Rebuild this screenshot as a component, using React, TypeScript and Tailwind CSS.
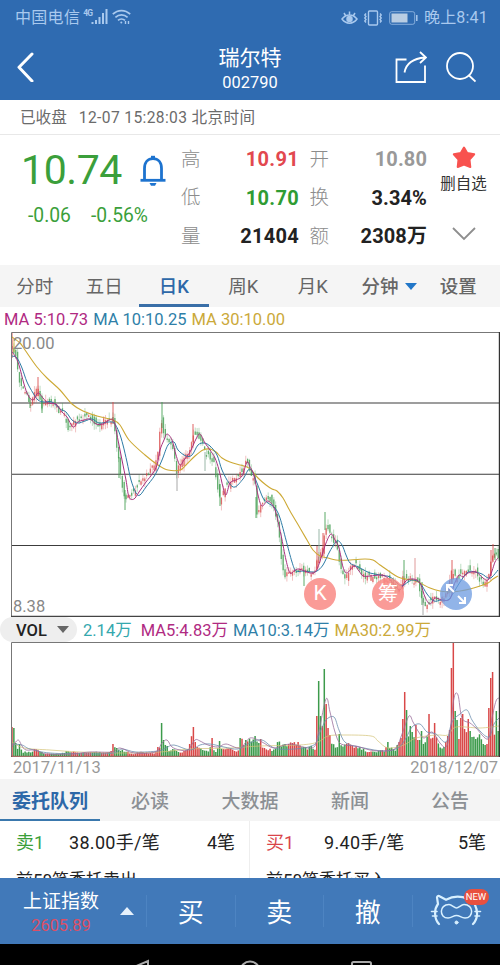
import React from 'react';
import { clsx } from 'clsx';

type Point = [number, number];

const GREEN = '#3d9b4c';
const RED = '#d94848';
const STEP = 1.87;
const COUNT = 261;

// Rough closing path of the year, in chart coordinates
const closes: Point[] = [
  [12, 345], [16, 358], [20, 387], [24, 388], [28, 398], [31, 403], [35, 392], [38, 387], [42, 408], [46, 402],
  [50, 400], [55, 405], [60, 412], [64, 412], [68, 427], [72, 424], [76, 420], [80, 418], [84, 418], [88, 416],
  [92, 418], [95, 426], [100, 424], [104, 421], [108, 420], [113, 420], [116, 440], [119, 463], [122, 484], [124, 498],
  [130, 496], [135, 491], [140, 482], [144, 478], [150, 472], [155, 464], [158, 450], [161, 418], [163, 432], [166, 438],
  [170, 444], [174, 450], [176, 473], [180, 465], [185, 454], [190, 452], [193, 436], [198, 434], [202, 443], [206, 454],
  [210, 457], [214, 462], [217, 482], [220, 500], [224, 490], [230, 480], [236, 478], [242, 471], [247, 460], [250, 472],
  [255, 482], [257, 512], [262, 505], [266, 500], [270, 500], [275, 512], [278, 525], [281, 555], [284, 572], [286, 576],
  [290, 572], [295, 572], [300, 568], [304, 572], [310, 573], [315, 570], [318, 556], [322, 550], [325, 529], [328, 530],
  [332, 537], [337, 545], [340, 565], [344, 578], [348, 572], [352, 567], [355, 562], [360, 572], [365, 576], [370, 575],
  [375, 576], [380, 577], [385, 577], [390, 582], [395, 588], [400, 590], [403, 576], [407, 580], [410, 577], [414, 582],
  [418, 580], [421, 595], [424, 605], [428, 605], [432, 600], [436, 597], [440, 600], [445, 599], [449, 585], [452, 570],
  [456, 577], [460, 575], [465, 572], [470, 570], [475, 572], [480, 580], [485, 583], [488, 578], [490, 567], [492, 556],
  [495, 552], [499, 560],
];

const ma5: Point[] = [
  [12, 352], [15, 356], [19, 365], [24, 384], [28, 395], [33, 400], [38, 393], [43, 398], [48, 403], [56, 404],
  [62, 412], [67, 417], [73, 427], [78, 422], [84, 420], [90, 419], [96, 424], [103, 424], [109, 420], [114, 421],
  [118, 440], [122, 460], [126, 480], [129, 497], [134, 499], [139, 492], [146, 482], [153, 473], [157, 465], [160, 450],
  [164, 440], [167, 434], [172, 440], [176, 455], [180, 465], [184, 460], [190, 452], [196, 439], [200, 434], [205, 443],
  [210, 450], [215, 458], [219, 470], [223, 487], [226, 495], [230, 483], [236, 480], [242, 476], [247, 462], [250, 467],
  [254, 475], [258, 495], [262, 506], [268, 501], [275, 510], [281, 535], [286, 560], [290, 573], [294, 571], [299, 569],
  [310, 573], [316, 571], [321, 558], [326, 543], [331, 534], [335, 540], [339, 548], [343, 567], [347, 573], [354, 566],
  [359, 571], [363, 576], [370, 576], [380, 575], [385, 576], [390, 580], [396, 587], [400, 590], [405, 582], [410, 579],
  [417, 580], [421, 585], [425, 597], [430, 604], [435, 598], [442, 600], [450, 599], [454, 585], [459, 575], [463, 577],
  [468, 573], [476, 572], [483, 578], [488, 580], [492, 571], [495, 562], [498, 558],
];

const ma10: Point[] = [
  [12, 356], [17, 358], [22, 368], [27, 382], [33, 393], [38, 400], [44, 402], [52, 402], [60, 409], [66, 412],
  [72, 420], [78, 423], [85, 421], [92, 419], [99, 423], [108, 422], [114, 423], [119, 432], [123, 445], [127, 462],
  [131, 480], [136, 493], [140, 495], [146, 487], [155, 475], [162, 460], [168, 445], [174, 442], [178, 450], [186, 456],
  [192, 455], [198, 445], [204, 443], [210, 446], [217, 455], [222, 470], [229, 483], [235, 487], [243, 479], [250, 469],
  [257, 483], [263, 498], [268, 503], [275, 508], [280, 518], [286, 540], [292, 562], [296, 571], [303, 571], [312, 572],
  [317, 571], [323, 565], [330, 551], [337, 541], [342, 545], [346, 555], [350, 563], [356, 566], [362, 569], [370, 573],
  [380, 575], [390, 577], [397, 583], [402, 586], [408, 582], [413, 580], [420, 583], [427, 594], [434, 601], [441, 600],
  [448, 600], [454, 592], [460, 582], [468, 572], [475, 572], [482, 574], [488, 578], [492, 577], [498, 570],
];

const ma30: Point[] = [
  [12, 337], [20, 343], [25, 350], [37, 367], [47, 378], [60, 390], [72, 404], [83, 411], [97, 416], [113, 420],
  [120, 425], [129, 440], [145, 455], [158, 465], [168, 470], [180, 470], [186, 465], [195, 456], [203, 450], [210, 449],
  [216, 452], [222, 458], [230, 462], [240, 465], [247, 467], [251, 470], [258, 478], [266, 485], [272, 489], [277, 491],
  [283, 498], [290, 511], [300, 528], [307, 540], [313, 550], [320, 556], [328, 558], [336, 560], [350, 560], [365, 559],
  [373, 560], [380, 565], [390, 572], [398, 577], [405, 579], [413, 580], [420, 583], [430, 588], [440, 591], [450, 592],
  [460, 591], [470, 589], [480, 586], [488, 583], [493, 579], [498, 576],
];

// Days whose range stands out: x, high, low, colour
const spikes: [number, number, number, string][] = [
  [12, 333, 358, RED], [14, 338, 352, '#d9b23c'], [38, 377, 396, RED], [30, 398, 408, GREEN], [42, 400, 413, GREEN],
  [113, 402, 424, RED], [162, 402, 428, GREEN], [119, 457, 478, GREEN], [125, 490, 510, GREEN], [177, 470, 491, '#999'],
  [193, 424, 442, RED], [205, 452, 471, '#88aa99'], [220, 484, 506, GREEN], [256, 497, 518, GREEN], [304, 572, 586, GREEN],
  [317, 546, 570, RED], [319, 529, 560, '#88aa99'], [323, 533, 556, RED], [325, 512, 530, GREEN], [404, 560, 580, GREEN],
  [415, 558, 584, '#d98a8a'], [422, 582, 605, GREEN], [423, 600, 615, '#999'], [452, 560, 585, RED], [491, 550, 576, RED],
  [493, 544, 562, RED], [495, 548, 560, GREEN],
];

// Volume profile: x, height, optional fixed colour
const volumes: [number, number, string?][] = [
  [12, 29, RED], [13.9, 28, GREEN], [15.7, 13, GREEN], [18, 6], [20, 12, GREEN], [22, 4], [31, 4], [34, 7, RED],
  [38, 7], [43, 3], [60, 2], [68, 5], [80, 3], [100, 4], [111, 4], [113, 12, RED], [116, 8, GREEN], [120, 6],
  [125, 5], [132, 2], [140, 4], [155, 3], [158, 9, RED], [160, 7], [162, 33, GREEN], [163.6, 16, GREEN], [165, 13],
  [169, 6], [174, 8], [180, 4], [187, 6], [190, 12, RED], [193, 29, RED], [195, 14, RED], [198, 8], [203, 7],
  [209, 4], [211.5, 18, RED], [214, 6], [217, 4], [219, 15, GREEN], [221, 8], [230, 7], [239, 5], [241, 18, GREEN],
  [243, 13], [246, 16, GREEN], [250, 15], [256, 20, GREEN], [258, 10], [260, 17, RED], [263, 8], [274, 6], [278, 13],
  [285, 12], [292, 12], [298, 14, RED], [306, 8], [312, 9], [315, 7], [317, 40, RED], [319, 75, GREEN], [321, 40, GREEN],
  [323, 30, RED], [324.8, 87, GREEN], [326.7, 52, RED], [328.6, 28, RED], [330.5, 21, RED], [332, 12], [337, 9],
  [339, 22, GREEN], [341, 12], [352, 11], [362, 7], [370, 4], [385, 6], [387.5, 14, GREEN], [390, 8], [395, 6],
  [399, 14, RED], [400.6, 18, RED], [402.5, 37, RED], [404.4, 64, RED], [406.2, 46, GREEN], [408, 20], [410, 30, GREEN],
  [413, 24], [415.5, 31, RED], [418, 16], [421, 25, GREEN], [424, 10], [426, 14], [428.5, 42, RED], [430, 20],
  [434.3, 33, RED], [437, 14], [441, 7], [443, 7], [445.4, 14, RED], [448.8, 26, RED], [450.7, 88, RED], [452.6, 114, RED],
  [454.5, 45, GREEN], [456.4, 36, GREEN], [458.5, 17, RED], [461, 38, RED], [463.5, 42, RED], [466, 26], [468, 37, RED],
  [470, 25, GREEN], [474, 20], [480, 20], [487, 11], [489.6, 48, RED], [491.5, 78, RED], [493.5, 84, RED],
  [495.4, 45, GREEN], [497.4, 25, GREEN],
];

const volMa5: Point[] = [
  [12, 747], [18, 740], [22, 746], [26, 750], [36, 750], [46, 754], [70, 754], [90, 752], [112, 752], [120, 748],
  [134, 753], [155, 752], [162, 743], [167, 740], [172, 747], [180, 750], [188, 750], [195, 740], [200, 741], [208, 745],
  [218, 747], [226, 744], [240, 748], [250, 738], [262, 742], [274, 748], [290, 744], [312, 748], [318, 735], [326, 699],
  [330, 712], [335, 732], [341, 744], [356, 746], [370, 750], [384, 751], [396, 748], [402, 734], [409, 716], [413, 722],
  [418, 731], [424, 738], [432, 732], [440, 743], [446, 747], [450, 732], [454, 698], [458, 695], [462, 718], [470, 723],
  [476, 728], [488, 739], [492, 718], [496, 701], [499, 698],
];
const volMa10: Point[] = [
  [12, 744], [22, 745], [30, 749], [50, 753], [90, 754], [114, 753], [122, 749], [136, 752], [158, 751], [166, 748],
  [174, 745], [190, 750], [200, 745], [210, 744], [224, 747], [238, 749], [250, 743], [262, 740], [278, 749], [312, 746],
  [320, 732], [326, 720], [334, 717], [339, 730], [346, 743], [364, 748], [384, 751], [398, 748], [406, 738], [412, 727],
  [420, 724], [427, 732], [436, 734], [446, 742], [452, 722], [460, 714], [467, 710], [472, 720], [480, 731], [489, 737],
  [494, 724], [499, 718],
];
const volMa30: Point[] = [
  [12, 742], [24, 748], [50, 750], [80, 752], [120, 753], [160, 752], [190, 749], [230, 748], [260, 746], [300, 745],
  [318, 742], [328, 736], [345, 735], [371, 736], [378, 741], [388, 748], [404, 745], [416, 738], [436, 735], [448, 735],
  [456, 727], [480, 728], [499, 726],
];

const noise = (n: number) => {
  const v = Math.sin(n * 127.1 + 11.7) * 43758.5453;
  return v - Math.floor(v);
};

const valueAt = (points: readonly (readonly [number, number, ...unknown[]])[], x: number) => {
  const next = points.findIndex((p) => p[0] >= x);
  if (next === -1) return points[points.length - 1][1];
  if (next === 0) return points[0][1];
  const [x0, y0] = points[next - 1];
  const [x1, y1] = points[next];
  return y0 + ((y1 - y0) * (x - x0)) / (x1 - x0);
};

// Catmull-Rom through all points
const smooth = (p: Point[]) => {
  let d = `M${p[0][0]} ${p[0][1]}`;
  for (let i = 0; i < p.length - 1; i++) {
    const a = p[Math.max(0, i - 1)];
    const b = p[i];
    const c = p[i + 1];
    const e = p[Math.min(p.length - 1, i + 2)];
    d += `C${b[0] + (c[0] - a[0]) / 6} ${b[1] + (c[1] - a[1]) / 6} ${c[0] - (e[0] - b[0]) / 6} ${c[1] - (e[1] - b[1]) / 6} ${c[0]} ${c[1]}`;
  }
  return d;
};

const PriceChart: React.FC = () => (
  <svg className="block w-[489px] h-[285px]" viewBox="11 332 489 285" fill="none">
    {[403, 474.3, 545.5].map((y) => (
      <path key={y} d={`M11 ${y}H499`} stroke="#3c3c3c" strokeWidth="1.1" />
    ))}
    {Array.from({ length: COUNT }, (_, i) => {
      const x = 12 + i * STEP;
      const shift = (noise(i + 200) - 0.5) * 5;
      const close = valueAt(closes, x) + shift;
      const open = valueAt(closes, x - STEP) + shift + (noise(i) - 0.5) * 9;
      const color = close > open ? GREEN : RED;
      const top = Math.max(335, Math.min(open, close) - 0.5);
      const bottom = Math.min(612, Math.max(open, close) + 0.8);
      return (
        <g key={i} opacity="0.8">
          <path
            d={`M${x} ${Math.max(334, top - noise(i + 400) * 6)}V${Math.min(614, bottom + noise(i + 800) * 6)}`}
            stroke={color}
            strokeWidth="0.6"
            opacity="0.7"
          />
          <path d={`M${x} ${top}V${bottom}`} stroke={color} strokeWidth="1.3" />
        </g>
      );
    })}
    {spikes.map(([x, high, low, color]) => (
      <path key={x} d={`M${x} ${high}V${low}`} stroke={color} strokeWidth="1" opacity="0.85" />
    ))}
    <path d={smooth(ma30)} stroke="#cda935" strokeWidth="1.1" />
    <path d={smooth(ma10)} stroke="#2c7aa5" />
    <path d={smooth(ma5)} stroke="#a9307f" />
    <path d="M11.5 617V332.5H499" stroke="#777" />
    <path d="M11 616.3H500" stroke="#444" strokeWidth="1.2" />
    <path d="M499.4 332V617" stroke="#333" strokeWidth="1.2" />
  </svg>
);

const VolumeChart: React.FC = () => (
  <svg className="block w-[489px] h-[115px]" viewBox="11 642 489 115" fill="none">
    {Array.from({ length: COUNT }, (_, i) => {
      const x = 12 + i * STEP;
      const fixed = volumes.find((v) => v[2] && Math.abs(v[0] - x) <= STEP / 2);
      const h = fixed ? fixed[1] : Math.min(24, valueAt(volumes, x)) * (0.75 + noise(i + 50) * 0.4);
      const rising = valueAt(closes, x) < valueAt(closes, x - STEP * 2) + (noise(i + 9) - 0.5) * 5;
      const color = fixed?.[2] ?? (rising ? RED : GREEN);
      return <path key={i} d={`M${x} 756V${756 - h}`} stroke={color} strokeWidth="1.5" />;
    })}
    <path d={smooth(volMa30)} stroke="#d3c274" strokeWidth="0.7" />
    <path d={smooth(volMa10)} stroke="#6d8fae" strokeWidth="0.8" />
    <path d={smooth(volMa5)} stroke="#9a6f9c" strokeWidth="0.8" />
    <path d="M11.5 757V642.5H499" stroke="#777" />
    <path d="M11 756.3H500" stroke="#8a4a40" />
    <path d="M499.4 642V757" stroke="#333" strokeWidth="1.2" />
  </svg>
);

const StatusBar: React.FC = () => (
  <div className="h-[34px] flex items-center justify-between pl-[15px] pr-3 pt-0.5 text-[#a9c9ee] text-base leading-none">
    <div className="flex items-center">
      <span className="tracking-[0.3px]">中国电信</span>
      <span className="w-[9px] text-[8.5px] font-bold ml-[3px] -mt-2.5 tracking-[-0.8px]">4G</span>
      <svg className="w-[17px] h-4 -ml-px -mt-0.5" viewBox="0 0 17 16" fill="currentColor">
        <path d="M.5 13h2v2h-2zM4 11h2v4H4zM7.5 8h2v7h-2zM11 4h2v11h-2zM14.500 0h2v15h-2z" />
      </svg>
      <svg className="w-[19px] h-4 ml-1 -mt-0.5" viewBox="0 0 19 16" fill="none" stroke="currentColor" strokeWidth="1.7">
        <path d="M.8 5.200c5-4.900 12.400-4.900 17.400 0M3.400 8.400c3.600-3.300 8.600-3.300 12.200 0M6 11.400c2-1.900 5-1.900 7 0" />
        <circle cx="9.300" cy="13.600" r="1" fill="currentColor" stroke="none" />
        <path d="M13.500 12v3M16.500 12v3" strokeWidth="1.400" />
      </svg>
    </div>
    <div className="flex items-center">
      <svg className="w-[17px] h-4" viewBox="0 0 17 16" fill="none" stroke="currentColor" strokeWidth="1.5">
        <path d="M1 9c4-5.500 11-5.500 15 0-4 5.500-11 5.500-15 0zM8.500 4.500V1.500M4.500 5.500 3 3M12.500 5.500 14 3" />
        <circle cx="8.500" cy="9" r="2.500" fill="currentColor" />
      </svg>
      <svg className="w-5 h-4 ml-[5px]" viewBox="0 0 20 16" fill="none" stroke="currentColor" strokeWidth="1.400">
        <rect x="5.500" y="1" width="9" height="14" rx="1" />
        <path d="M3 3.500 1.800 5 3 6.500 1.800 8 3 9.500 1.800 11 3 12.500M17 3.500 18.200 5 17 6.500 18.200 8 17 9.500 18.200 11 17 12.500" />
      </svg>
      <svg className="w-[29px] h-[14px] ml-1.5" viewBox="0 0 29 14" fill="none" stroke="currentColor">
        <rect x=".7" y=".7" width="25" height="12.600" rx="2" strokeWidth="1" opacity=".7" />
        <rect x="2.500" y="2.500" width="16" height="9" fill="#b9cde3" stroke="none" />
        <path d="M27.800 4v6" strokeWidth="1.500" />
      </svg>
      <span className="ml-1.5 tracking-[0.2px]">晚上8:41</span>
    </div>
  </div>
);

const Header: React.FC = () => (
  <div className="h-[66px] flex items-center justify-between pl-4 pr-6 text-white">
    <svg className="w-[19px] h-[30px]" viewBox="0 0 19 30" fill="none" stroke="currentColor" strokeWidth="3" strokeLinecap="round" strokeLinejoin="round">
      <path d="M16 2 3 15.300 16 29" />
    </svg>
    <div className="flex flex-col items-center ml-[70px] pt-[5px]">
      <h1 className="text-[21px] leading-[26px]">瑞尔特</h1>
      <div className="text-[16.4px] leading-[23px]">002790</div>
    </div>
    <div className="flex items-center">
      <svg className="w-8 h-8" viewBox="0 0 32 32" fill="none" stroke="currentColor" strokeWidth="1.800">
        <path d="M11.500 8.500H1.500v22.500h28.500V14.500" />
        <path d="M9.500 21.500C11 13 17 7.500 30 6.500M25 1l6 5.500-6 5.500" />
      </svg>
      <svg className="w-[31px] h-[31px] ml-[18px]" viewBox="0 0 31 31" fill="none" stroke="currentColor" strokeWidth="1.800">
        <circle cx="15" cy="14" r="13" />
        <path d="m23.500 23 7 6.500" />
      </svg>
    </div>
  </div>
);

const stats = [
  { label: '高', value: '10.91', color: 'text-[#e2484f]', label2: '开', value2: '10.80', color2: 'text-[#999]' },
  { label: '低', value: '10.70', color: 'text-[#2f9c33]', label2: '换', value2: '3.34%', color2: 'text-[#222]' },
  { label: '量', value: '21404', color: 'text-[#222]', label2: '额', value2: '2308万', color2: 'text-[#222]' },
];

const Quote: React.FC = () => (
  <div className="h-[130px] flex bg-white">
    <div className="w-[181px] pt-[11px]">
      <div className="flex items-center pl-[21px] h-[48px]">
        <span className="text-[41px] leading-none text-[#3b9f3b] tracking-[-0.4px]">10.74</span>
        <svg className="w-[26px] h-[31px] ml-[18px]" viewBox="0 0 26 31" fill="none" stroke="#1d73cf" strokeWidth="2.800">
          <path d="M.5 25.300H25.500" />
          <path d="M4.500 25V13.500C4.500 7 8 3.700 13 3.700s8.500 3.300 8.500 9.800V25" />
          <path d="M11 2.200h4" />
          <path d="M9.500 28h7l-1.500 2.700h-4z" fill="#1d73cf" stroke="none" />
        </svg>
      </div>
      <div className="flex gap-5 pl-7 pt-2.5 text-[19.3px] leading-6 text-[#3b9f3b]">
        <span>-0.06</span>
        <span>-0.56%</span>
      </div>
    </div>
    <div className="w-[246px] pt-[5px]">
      {stats.map((s) => (
        <div key={s.label} className="h-[38.5px] flex items-center text-[19.5px]">
          <span className="text-[#8c8c8c] font-light">{s.label}</span>
          <span className={clsx('flex-1 text-right text-[20px] font-bold tracking-[0.3px]', s.color)}>{s.value}</span>
          <span className="w-[30px] text-right text-[#8c8c8c] font-light">{s.label2}</span>
          <span className={clsx('w-[98px] text-right text-[20px] font-bold tracking-[0.1px]', s.color2)}>{s.value2}</span>
        </div>
      ))}
    </div>
    <div className="flex-1 flex flex-col items-center pt-[11px]">
      <svg className="w-6 h-[23px]" viewBox="0 0 24 23" fill="#f8524f" stroke="#f8524f" strokeWidth="2" strokeLinejoin="round">
        <path d="m12 1.500 3.200 5.600 7 1.200-4.700 5.200.8 7.500-6.300-2.500L5.700 21l.8-7.500L1.800 8.300l7-1.200z" />
      </svg>
      <span className="text-[15.5px] leading-6 mt-[3px] text-[#333] whitespace-nowrap">删自选</span>
      <svg className="w-6 h-[14px] mt-[31px]" viewBox="0 0 24 14" fill="none" stroke="#8e8e8e" strokeWidth="1.800">
        <path d="m1 1 11 11L23 1" />
      </svg>
    </div>
  </div>
);

const periods = ['分时', '五日', '日K', '周K', '月K'];

const PeriodTabs: React.FC = () => (
  <div className="h-[42px] flex bg-[#f5f5f5] text-[18.5px] text-[#666] font-medium">
    {periods.map((p) => (
      <div
        key={p}
        className={clsx(
          'w-[69.5px] flex items-center justify-center border-b-[3px] pt-[7px]',
          p === '日K' ? 'text-[#2d68a8] border-[#3a6fa8]' : 'border-transparent font-normal'
        )}
      >
        {p}
      </div>
    ))}
    <div className="w-[69px] flex items-center justify-end pt-1">
      <span>分钟</span>
      <svg className="w-3 h-[7px] ml-1.5 -mt-1" viewBox="0 0 12 7">
        <path d="M0 0h12L6 7z" fill="#2277c8" />
      </svg>
    </div>
    <div className="flex-1 flex items-center justify-center pt-1">设置</div>
  </div>
);

const newsTabs = ['委托队列', '必读', '大数据', '新闻', '公告'];

const queue = [
  { side: '卖1', color: 'text-[#3b9f3b]', lots: '38.00手/笔', orders: '4笔', note: '前50笔委托卖出' },
  { side: '买1', color: 'text-[#d9444a]', lots: '9.40手/笔', orders: '5笔', note: '前50笔委托买入' },
];

const OrderQueue: React.FC = () => (
  <div className="h-[57px] flex bg-white overflow-hidden text-[17px] text-[#222]">
    {queue.map((q) => (
      <div key={q.side} className="w-1/2 border-r border-[#eee] last:border-r-0 pl-4 pr-[14px]">
        <div className="h-[43px] flex items-center text-[18px]">
          <span className={clsx('w-[53px]', q.color)}>{q.side}</span>
          <span className={clsx('tracking-[0.3px]', q.side === '买1' && 'ml-[5px]')}>{q.lots}</span>
          <span className="ml-auto">{q.orders}</span>
        </div>
        <div className="leading-[26px] mt-[3px]">{q.note}</div>
      </div>
    ))}
  </div>
);

const TradeBar: React.FC = () => (
  <div className="h-[66px] flex items-center bg-[#4179b9] text-white">
    <div className="w-[146px] flex items-center pl-[23px]">
      <div className="flex flex-col items-center pt-[5px]">
        <span className="text-[19px] leading-6">上证指数</span>
        <span className="text-[16.4px] leading-6 text-[#dc4f66]">2605.89</span>
      </div>
      <svg className="w-[14px] h-2 ml-[21px]" viewBox="0 0 14 8">
        <path d="M7 0l7 8H0z" fill="#e6f1fc" />
      </svg>
    </div>
    {['买', '卖', '撤'].map((action) => (
      <div key={action} className="w-[88.5px] flex items-center border-l border-[#4d84c2] h-8">
        <span className="w-full text-center text-[26px] leading-none pt-1">{action}</span>
      </div>
    ))}
    <div className="flex-1 relative flex items-center h-8 border-l border-[#4d84c2] pl-[17px]">
      <svg className="w-[52px] h-8 -mt-0.5" viewBox="0 0 52 32" fill="none" stroke="#d8f0ff" strokeWidth="2.200" strokeLinecap="round">
        <path d="M9 30C4 25 4 15 8 10L7 3.500c0-1.500 1.500-2 3-1l6 3.300C23 2 31 2 38 5M43 30c5-5 5-13 2-19" />
        <path d="M1.500 17.500H7M2.500 22H7M45 17.500h5.500M45 22h4.500" strokeWidth="1.600" />
        <path d="M19 10.500c3 0 5 3.500 7.500 3.500s4.500-3.500 7.500-3.500c10 0 10 13.500 1 13.500-4 0-5-2.500-8.500-2.500S22 24 18 24C9 24 9 10.500 19 10.500z" strokeWidth="1.500" />
        <circle cx="26.500" cy="28.500" r="1.500" fill="#d8f0ff" strokeWidth="1" />
      </svg>
      <span className="absolute left-[51px] -top-[6px] w-[25px] h-4 rounded-lg bg-[#e8503f] text-[9.5px] leading-4 text-center">NEW</span>
    </div>
  </div>
);

export default function App() {
  return (
    <div className="w-[500px] h-[965px] overflow-hidden flex flex-col bg-white font-['Roboto','Noto_Sans_CJK_SC',sans-serif]">
      <div className="bg-[#2f6bb1]">
        <StatusBar />
        <Header />
      </div>

      <div className="h-[35px] shrink-0 flex items-center gap-3 pl-5 pt-1 border-b border-[#e8e8e8] text-[15.6px] text-[#6b6b6b]">
        <span>已收盘</span>
        <span className="tracking-[0.37px]">12-07 15:28:03 北京时间</span>
      </div>

      <Quote />
      <PeriodTabs />

      {/* Price moving averages */}
      <div className="h-[25px] flex items-center gap-[5px] pl-1 pt-0.5 text-[16.5px] whitespace-nowrap">
        <span className="text-[#b02a82]">MA 5:10.73</span>
        <span className="text-[#2f7fa8]">MA 10:10.25</span>
        <span className="text-[#cba93a]">MA 30:10.00</span>
      </div>

      <div className="relative ml-[11px] h-[285px]">
        <PriceChart />
        <span className="absolute left-0.5 top-[2px] text-[16.5px] leading-5 text-[#888]">20.00</span>
        <span className="absolute left-0.5 bottom-0 text-[16.5px] leading-5 text-[#888]">8.38</span>
        <div className="absolute left-[293px] top-[246px] flex gap-9 text-white">
          <span className="w-8 h-8 rounded-full bg-[#f98a85]/85 flex items-center justify-center text-[21px]">K</span>
          <span className="w-8 h-8 rounded-full bg-[#f98a85]/85 flex items-center justify-center text-[20px]">筹</span>
          <span className="w-8 h-8 rounded-full bg-[#6c9be0]/75 flex items-center justify-center">
            <svg className="w-5 h-5" viewBox="0 0 20 20" fill="none" stroke="currentColor" strokeWidth="2">
              <path d="M8 8 1 1M1 7V1h6M12 12l7 7M19 13v6h-6" />
            </svg>
          </span>
        </div>
      </div>

      {/* Volume legend */}
      <div className="h-[25px] flex items-center text-[16.5px] whitespace-nowrap">
        <div className="w-[77px] h-[25px] rounded-full bg-[#eee] flex items-center pl-4 text-[#222] font-medium">
          <span className="pt-[3px]">VOL</span>
          <svg className="w-3 h-[7px] ml-[10px]" viewBox="0 0 12 7">
            <path d="M0 0h12L6 7z" fill="#666" />
          </svg>
        </div>
        <div className="flex pt-[3px]">
          <span className="ml-1.5 text-[#35a8ae]">2.14万</span>
          <span className="ml-[9px] text-[#b02a82]">MA5:4.83万</span>
          <span className="ml-[5px] text-[#2f7fa8]">MA10:3.14万</span>
          <span className="ml-[5px] text-[#cba93a]">MA30:2.99万</span>
        </div>
      </div>

      <div className="ml-[11px] h-[115px]">
        <VolumeChart />
      </div>
      <div className="h-[22px] flex items-center justify-between pl-[13px] pr-0.5 pt-px text-[16.5px] text-[#999]">
        <span>2017/11/13</span>
        <span>2018/12/07</span>
      </div>

      <div className="h-[42px] flex bg-[#f4f4f4] text-[19px] font-medium text-[#8c9094]">
        {newsTabs.map((tab, i) => (
          <div
            key={tab}
            className={clsx(
              'w-[100px] flex items-center justify-center border-b-2 pt-[6px]',
              i === 0 ? 'text-[#2d68a8] border-[#3a78ad] font-bold' : 'border-transparent'
            )}
          >
            {tab}
          </div>
        ))}
      </div>
      <OrderQueue />
      <TradeBar />

      {/* System navigation */}
      <div className="h-[21px] bg-black">
        <svg className="block w-full h-[21px]" viewBox="0 0 500 21" fill="none" stroke="#aaa" strokeWidth="2">
          <path d="M148 17v8l-14-2z" />
          <circle cx="250" cy="27" r="9.500" />
          <rect x="352" y="18" width="19" height="18" rx="1.500" />
        </svg>
      </div>
    </div>
  );
}
